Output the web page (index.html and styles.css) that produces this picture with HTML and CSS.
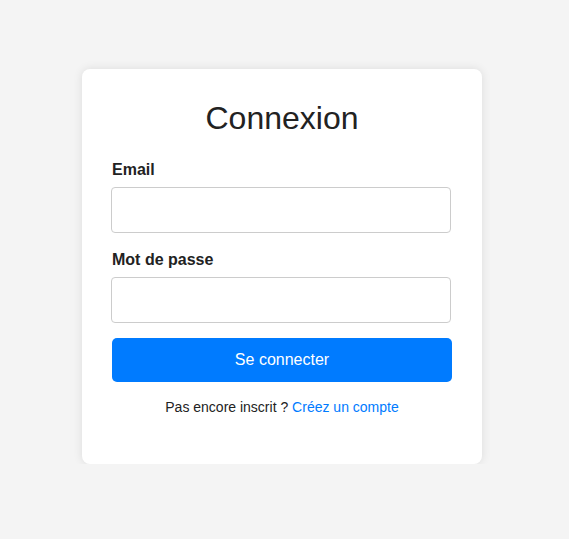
FILE: index.html
```html
<!DOCTYPE html>
<html lang="fr">
<head>
<meta charset="utf-8">
<title>Connexion</title>
<link rel="stylesheet" href="styles.css">
</head>
<body>
<main class="page">
  <div class="card">
    <h1 class="title">Connexion</h1>
    <form class="form">
      <label class="label" for="email">Email</label>
      <input class="input" id="email" type="email">
      <label class="label" for="pwd">Mot de passe</label>
      <input class="input" id="pwd" type="password">
      <button class="btn" type="button">Se connecter</button>
    </form>
    <p class="footer">Pas encore inscrit ? <a class="link" href="#">Créez un compte</a></p>
  </div>
</main>
</body>
</html>
```
FILE: styles.css
```css
html, body {
  margin: 0;
  padding: 0;
  background: #f4f4f4;
  font-family: "Liberation Sans", Arial, sans-serif;
  color: #222;
}
.page {
  padding: 69px 0 0 82px;
  display: flex;
  align-items: flex-start;
}
.card {
  width: 400px;
  box-sizing: border-box;
  padding: 30px;
  background: #fff;
  border-radius: 8px;
  box-shadow: 0 0 10px rgba(0, 0, 0, 0.1);
}
.title {
  margin: 1px 0 22px;
  font-size: 32px;
  line-height: 37px;
  font-weight: normal;
  text-align: center;
  color: #222;
}
.form {
  display: flex;
  flex-direction: column;
}
.label {
  display: block;
  font-size: 16px;
  font-weight: bold;
  line-height: 21px;
  margin-bottom: 7px;
  color: #222;
}
.input {
  box-sizing: border-box;
  width: 340px;
  height: 46px;
  margin: 0 0 16px -1px;
  border: 1px solid #ccc;
  border-radius: 4px;
  padding: 0 10px;
  font-size: 16px;
  background: #fff;
}
.input + .btn {
  margin-top: -1px;
}
.btn {
  box-sizing: border-box;
  width: 340px;
  height: 44px;
  border: none;
  border-radius: 5px;
  background: #007bff;
  color: #fff;
  font-family: "Liberation Sans", Arial, sans-serif;
  font-size: 16px;
  cursor: pointer;
}
.footer {
  margin: 17px 0 19px;
  font-size: 14px;
  line-height: 16px;
  text-align: center;
  color: #222;
}
.link {
  color: #007bff;
  text-decoration: none;
}
```
